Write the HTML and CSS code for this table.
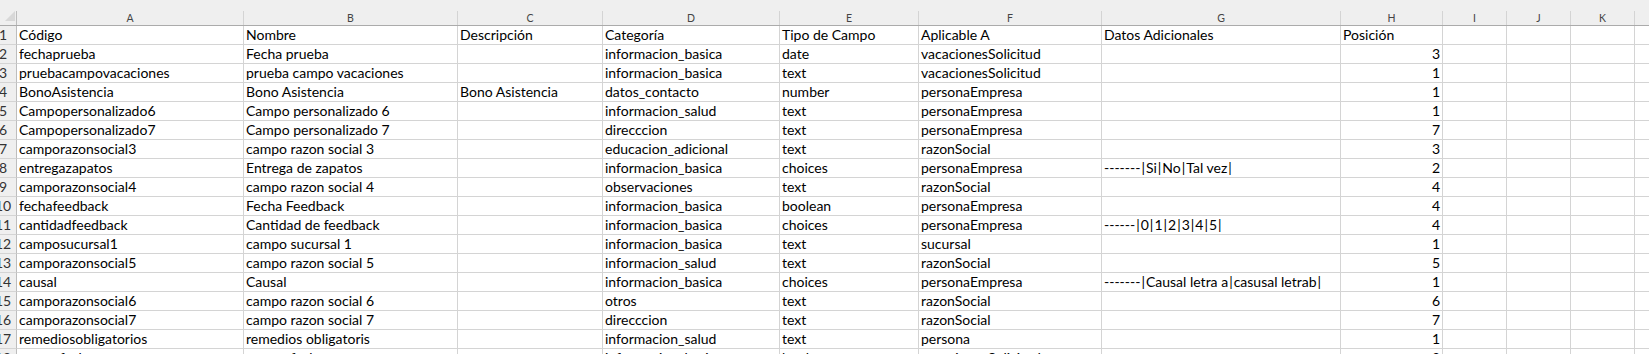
FILE: index.html
```html
<!DOCTYPE html>
<html lang="es">
<head>
<meta charset="utf-8">
<title>Campos personalizados</title>
<link rel="stylesheet" href="styles.css">
</head>
<body>
<div class="sheet">
  <div class="colhead">
    <div class="corner"><svg width="16" height="14" viewBox="0 0 16 14"><polygon points="5,10 15,10 15,0" fill="#d8d8d8"/></svg></div>
    <div>A</div><div>B</div><div>C</div><div>D</div><div>E</div><div>F</div><div>G</div><div>H</div><div>I</div><div>J</div><div>K</div><div class="last"></div>
  </div>

  <div class="row"><div class="rh"><span>1</span></div><div>Código</div><div>Nombre</div><div>Descripción</div><div>Categoría</div><div>Tipo de Campo</div><div>Aplicable A</div><div>Datos Adicionales</div><div>Posición</div><div></div><div></div><div></div><div class="last"></div></div>
  <div class="row"><div class="rh"><span>2</span></div><div>fechaprueba</div><div>Fecha prueba</div><div></div><div>informacion_basica</div><div>date</div><div>vacacionesSolicitud</div><div></div><div class="num">3</div><div></div><div></div><div></div><div class="last"></div></div>
  <div class="row"><div class="rh"><span>3</span></div><div>pruebacampovacaciones</div><div>prueba campo vacaciones</div><div></div><div>informacion_basica</div><div>text</div><div>vacacionesSolicitud</div><div></div><div class="num">1</div><div></div><div></div><div></div><div class="last"></div></div>
  <div class="row"><div class="rh"><span>4</span></div><div>BonoAsistencia</div><div>Bono Asistencia</div><div>Bono Asistencia</div><div>datos_contacto</div><div>number</div><div>personaEmpresa</div><div></div><div class="num">1</div><div></div><div></div><div></div><div class="last"></div></div>
  <div class="row"><div class="rh"><span>5</span></div><div>Campopersonalizado6</div><div>Campo personalizado 6</div><div></div><div>informacion_salud</div><div>text</div><div>personaEmpresa</div><div></div><div class="num">1</div><div></div><div></div><div></div><div class="last"></div></div>
  <div class="row"><div class="rh"><span>6</span></div><div>Campopersonalizado7</div><div>Campo personalizado 7</div><div></div><div>direcccion</div><div>text</div><div>personaEmpresa</div><div></div><div class="num">7</div><div></div><div></div><div></div><div class="last"></div></div>
  <div class="row"><div class="rh"><span>7</span></div><div>camporazonsocial3</div><div>campo razon social 3</div><div></div><div>educacion_adicional</div><div>text</div><div>razonSocial</div><div></div><div class="num">3</div><div></div><div></div><div></div><div class="last"></div></div>
  <div class="row"><div class="rh"><span>8</span></div><div>entregazapatos</div><div>Entrega de zapatos</div><div></div><div>informacion_basica</div><div>choices</div><div>personaEmpresa</div><div>-------<span class="bar">|</span>Si<span class="bar">|</span>No<span class="bar">|</span>Tal vez<span class="bar">|</span></div><div class="num">2</div><div></div><div></div><div></div><div class="last"></div></div>
  <div class="row"><div class="rh"><span>9</span></div><div>camporazonsocial4</div><div>campo razon social 4</div><div></div><div>observaciones</div><div>text</div><div>razonSocial</div><div></div><div class="num">4</div><div></div><div></div><div></div><div class="last"></div></div>
  <div class="row"><div class="rh"><span>10</span></div><div>fechafeedback</div><div>Fecha Feedback</div><div></div><div>informacion_basica</div><div>boolean</div><div>personaEmpresa</div><div></div><div class="num">4</div><div></div><div></div><div></div><div class="last"></div></div>
  <div class="row"><div class="rh"><span>11</span></div><div>cantidadfeedback</div><div>Cantidad de feedback</div><div></div><div>informacion_basica</div><div>choices</div><div>personaEmpresa</div><div>------<span class="bar">|</span>0<span class="bar">|</span>1<span class="bar">|</span>2<span class="bar">|</span>3<span class="bar">|</span>4<span class="bar">|</span>5<span class="bar">|</span></div><div class="num">4</div><div></div><div></div><div></div><div class="last"></div></div>
  <div class="row"><div class="rh"><span>12</span></div><div>camposucursal1</div><div>campo sucursal 1</div><div></div><div>informacion_basica</div><div>text</div><div>sucursal</div><div></div><div class="num">1</div><div></div><div></div><div></div><div class="last"></div></div>
  <div class="row"><div class="rh"><span>13</span></div><div>camporazonsocial5</div><div>campo razon social 5</div><div></div><div>informacion_salud</div><div>text</div><div>razonSocial</div><div></div><div class="num">5</div><div></div><div></div><div></div><div class="last"></div></div>
  <div class="row"><div class="rh"><span>14</span></div><div>causal</div><div>Causal</div><div></div><div>informacion_basica</div><div>choices</div><div>personaEmpresa</div><div>-------<span class="bar">|</span>Causal letra a<span class="bar">|</span>casusal letrab<span class="bar">|</span></div><div class="num">1</div><div></div><div></div><div></div><div class="last"></div></div>
  <div class="row"><div class="rh"><span>15</span></div><div>camporazonsocial6</div><div>campo razon social 6</div><div></div><div>otros</div><div>text</div><div>razonSocial</div><div></div><div class="num">6</div><div></div><div></div><div></div><div class="last"></div></div>
  <div class="row"><div class="rh"><span>16</span></div><div>camporazonsocial7</div><div>campo razon social 7</div><div></div><div>direcccion</div><div>text</div><div>razonSocial</div><div></div><div class="num">7</div><div></div><div></div><div></div><div class="last"></div></div>
  <div class="row"><div class="rh"><span>17</span></div><div>remediosobligatorios</div><div>remedios obligatoris</div><div></div><div>informacion_salud</div><div>text</div><div>persona</div><div></div><div class="num">1</div><div></div><div></div><div></div><div class="last"></div></div>
  <div class="row"><div class="rh"><span>18</span></div><div>campofecha</div><div>campo fecha</div><div></div><div>informacion_basica</div><div>boolean</div><div>vacacionesSolicitud</div><div></div><div class="num">2</div><div></div><div></div><div></div><div class="last"></div></div>
</div>
</body>
</html>
```
FILE: styles.css
```css
:root {
  --cols: 17px 227px 214px 145px 177px 139px 183px 239px 102px 64px 64px 64px 1fr;
}

html, body {
  margin: 0;
  padding: 0;
  background: #ffffff;
  overflow: hidden;
}

body {
  font-family: Lato, "Liberation Sans", sans-serif;
}

.sheet {
  width: 1649px;
}

.colhead {
  display: grid;
  grid-template-columns: var(--cols);
  background: #efefef;
  padding-top: 11px;
  border-bottom: 1px solid #ababab;
}

.colhead > div {
  height: 14px;
  border-right: 1px solid #d4d4d4;
  text-align: center;
  font-size: 10.5px;
  line-height: 14px;
  color: #444444;
}

.colhead > .corner {
  border-right-color: #bdbdbd;
}

.corner svg {
  display: block;
}

.colhead > .last,
.row > .last {
  border-right: none;
}

.row {
  display: grid;
  grid-template-columns: var(--cols);
  height: 19px;
}

.row > div {
  box-sizing: border-box;
  height: 19px;
  border-right: 1px solid #d4d4d4;
  border-bottom: 1px solid #d4d4d4;
  font-size: 14px;
  line-height: 18px;
  padding: 0 2px;
  white-space: nowrap;
  overflow: hidden;
  color: #000000;
}

.row > .rh {
  background: #efefef;
  border-right-color: #bdbdbd;
  color: #333333;
  padding: 0;
}

.rh span {
  display: block;
  width: 26px;
  margin-left: -10px;
  text-align: center;
}

.bar {
  margin: 0 1px;
}

.row > .num {
  text-align: right;
  padding-right: 2px;
}
```
